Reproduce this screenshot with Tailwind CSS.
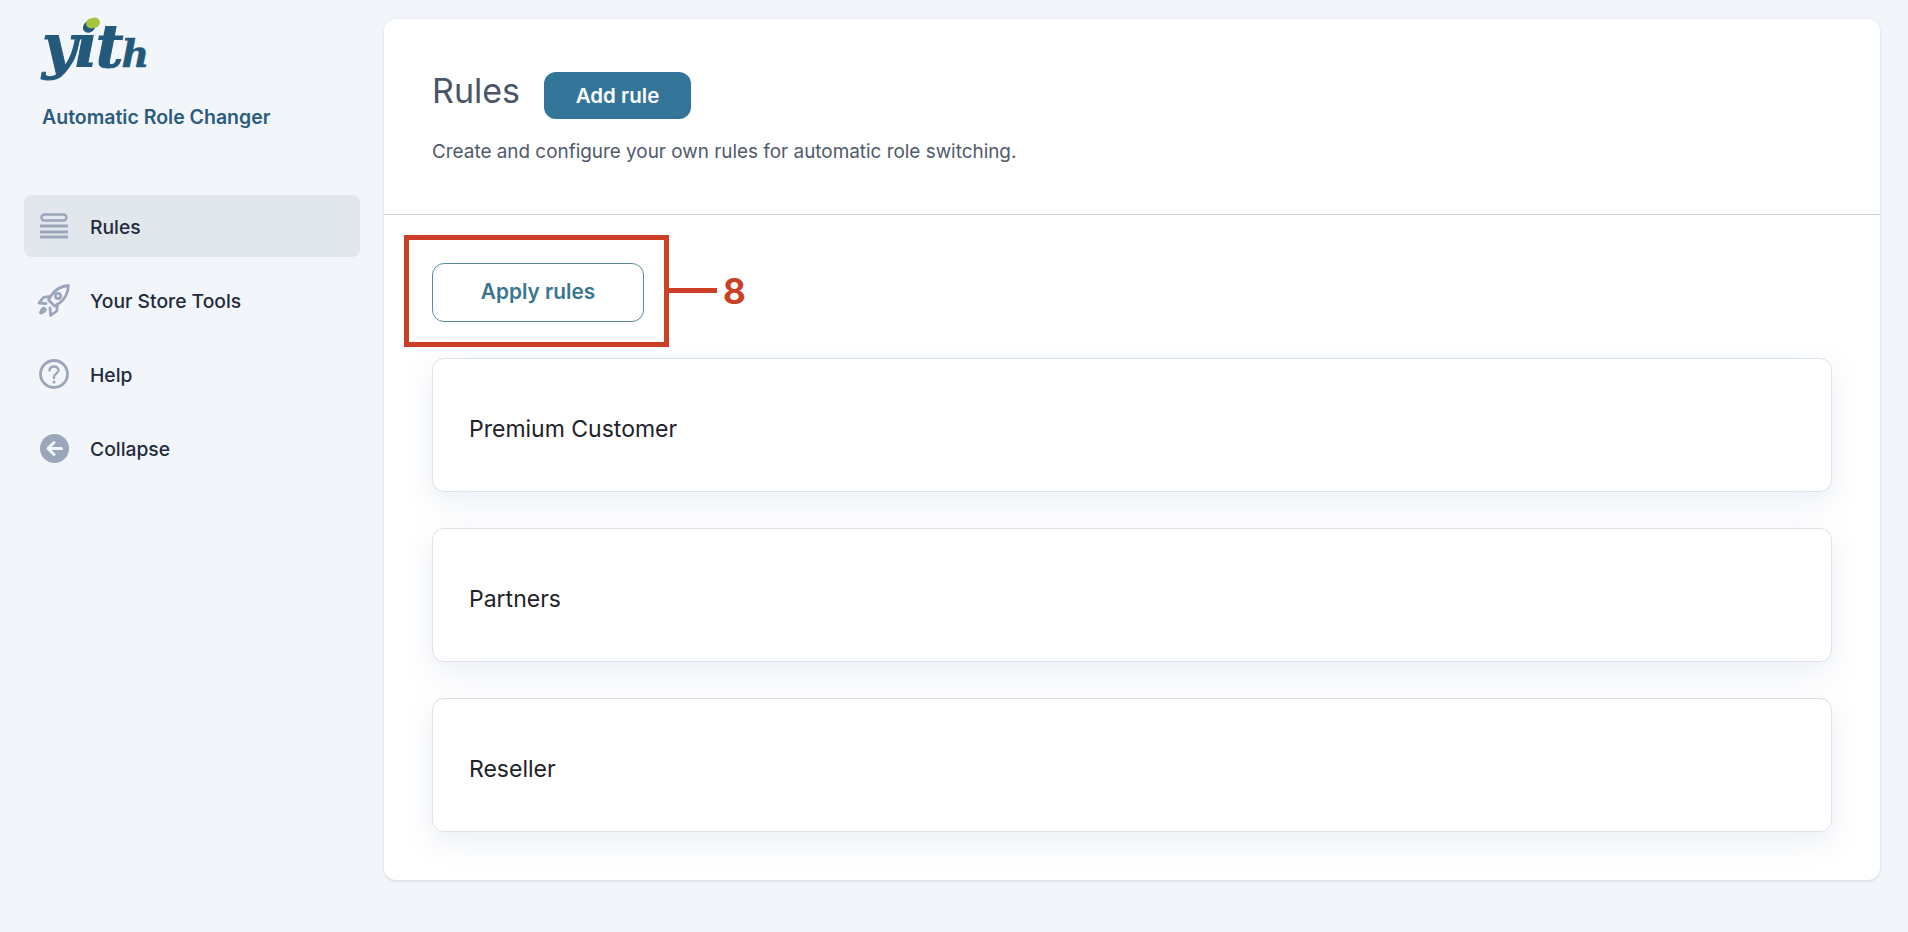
<!DOCTYPE html>
<html lang="en">
<head>
    <meta charset="UTF-8">
    <title>Automatic Role Changer - Rules</title>
    <script src="https://cdn.jsdelivr.net/npm/@tailwindcss/browser@4"></script>
</head>
<body class="bg-[#f2f6fb] font-['Inter',sans-serif] h-[932px] overflow-hidden">
    <div class="flex h-full">
        <!-- sidebar -->
        <aside class="w-[384px] shrink-0 pl-6 pr-6">
            <div class="pl-[18px] pt-[12px] h-[195px]">
                <div class="relative h-[80px] w-[120px] flex items-baseline text-[#235a7c] font-['DejaVu_Serif',serif] font-bold italic leading-[68px]">
                    <span class="text-[60px] tracking-[-2px] [-webkit-text-stroke:1px_#235a7c]">yit</span>
                    <span class="text-[38px] tracking-[-1px] [-webkit-text-stroke:0.5px_#235a7c]">h</span>
                    <span class="absolute left-[44px] top-[6px] w-[14px] h-[10px] rounded-full bg-[#a5c63b] -rotate-12"></span>
                </div>
                <p class="mt-[13px] text-[#2b5c7c] text-[19.5px] leading-6 font-semibold">Automatic Role Changer</p>
            </div>
            <nav class="flex flex-col gap-3 text-[19.3px] font-medium text-[#232b3b]">
                <a class="flex items-center h-[62px] bg-[#e2e6ed] rounded-lg">
                    <svg class="ml-4 mr-[22px] w-[28px] h-[26px]" viewBox="0 0 28 26" fill="none" stroke="#9ca6bb">
                        <rect x="1.500" y="1.500" width="25" height="6" rx="3" stroke-width="2.400"/>
                        <path d="M0 13h28M0 19h28M0 24h28" stroke-width="2.800"/>
                    </svg>
                    <span class="pt-[2px]">Rules</span>
                </a>
                <a class="flex items-center h-[62px]">
                    <svg class="ml-[13px] mr-[20px] w-[33px] h-[33px]" viewBox="0 0 33 33" fill="none" stroke="#9ca6bb" stroke-width="2.800" stroke-linejoin="round" stroke-linecap="round">
                        <path d="M31.500 1.500c-7 .6-13 3.800-17 9.500l-3 5 6 6 5-3c5.500-4 8.500-10.500 9-17.500z"/>
                        <circle cx="21" cy="12" r="2.600"/>
                        <path d="M13 12.500l-6.500.8-4.500 5.700 7 .5M20.500 20.500l-.8 6.500-6 4.500-.7-7.500"/>
                        <path d="M7 24c-2 .5-3 2-3.500 5 3-.5 4.500-1.500 5-3.500"/>
                    </svg>
                    <span class="pt-[2px]">Your Store Tools</span>
                </a>
                <a class="flex items-center h-[62px]">
                    <svg class="ml-[15px] mr-[21px] w-[30px] h-[30px]" viewBox="0 0 30 30" fill="none" stroke="#9ca6bb">
                        <circle cx="15" cy="15" r="13.500" stroke-width="2.800"/>
                        <path d="M10.500 11.500c.3-2.500 2.200-4 4.600-4 2.500 0 4.400 1.600 4.400 3.800 0 3.200-4.500 3.400-4.500 6.700v1" stroke-width="2.400" stroke-linecap="round"/>
                        <circle cx="15" cy="23" r="1.500" fill="#9ca6bb" stroke="none"/>
                    </svg>
                    <span class="pt-[2px]">Help</span>
                </a>
                <a class="flex items-center h-[62px]">
                    <svg class="ml-[16px] mr-[21px] w-[29px] h-[29px]" viewBox="0 0 29 29" fill="none">
                        <circle cx="14.500" cy="14.500" r="14.500" fill="#9ca6bb"/>
                        <path d="M21.500 14.500H8.500M14 8.500l-6 6 6 6" stroke="#f2f6fb" stroke-width="3" stroke-linecap="round" stroke-linejoin="round"/>
                    </svg>
                    <span class="pt-[2px]">Collapse</span>
                </a>
            </nav>
        </aside>

        <!-- main card -->
        <main class="w-[1496px] h-[861px] mt-[19px] bg-white rounded-xl shadow-[0_1px_3px_rgba(60,70,90,0.18)] overflow-hidden">
            <header class="h-[196px] border-b border-[#d0d4da] pl-12 pt-[50px]">
                <div class="flex items-center gap-6">
                    <h1 class="text-[34px] leading-[44px] mb-[9px] text-[#4a5567] font-normal">Rules</h1>
                    <button class="w-[147px] h-[47px] pt-[2px] rounded-xl bg-[#337499] text-white text-[20.5px] font-semibold">Add rule</button>
                </div>
                <p class="mt-[18px] text-[18.9px] leading-6 text-[#4f5a6a]">Create and configure your own rules for automatic role switching.</p>
            </header>
            <section class="px-12">
                <div class="relative pt-[48px] pb-[36px]">
                    <button class="block w-[212px] h-[59px] pb-[2px] rounded-xl border border-[#5d8a9e] text-[#3a7591] text-[20.800px] font-semibold">Apply rules</button>
                    <div class="absolute left-[-28px] top-[20px] w-[265px] h-[112px] border-[5px] border-[#cb3f26]"></div>
                    <div class="absolute left-[236px] top-[73px] w-[49px] h-[5px] bg-[#cb3f26]"></div>
                    <span class="absolute left-[291px] top-[54px] text-[#cb3f26] text-[35px] leading-[44px] font-bold">8</span>
                </div>
                <div class="flex flex-col gap-[36px]">
                    <div class="h-[134px] flex items-center pl-[36px] pt-[9px] bg-white rounded-xl border border-[#dce2e9] shadow-[0_10px_30px_rgba(150,170,200,0.2)] text-[23px] text-[#1f2229]">Premium Customer</div>
                    <div class="h-[134px] flex items-center pl-[36px] pt-[9px] bg-white rounded-xl border border-[#dce2e9] shadow-[0_10px_30px_rgba(150,170,200,0.2)] text-[23px] text-[#1f2229]">Partners</div>
                    <div class="h-[134px] flex items-center pl-[36px] pt-[9px] bg-white rounded-xl border border-[#dce2e9] shadow-[0_10px_30px_rgba(150,170,200,0.2)] text-[23px] text-[#1f2229]">Reseller</div>
                </div>
            </section>
        </main>
    </div>
</body>
</html>
